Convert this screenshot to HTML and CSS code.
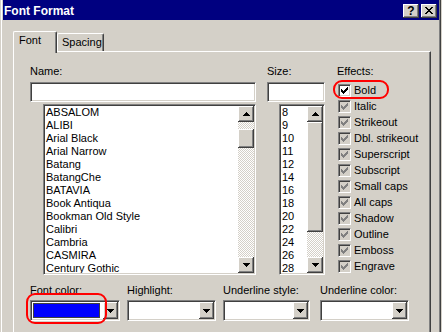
FILE: index.html
```html
<!DOCTYPE html>
<html>
<head>
<meta charset="utf-8">
<title>Font Format</title>
<link rel="stylesheet" href="styles.css">
</head>
<body>
<div class="win">
  <div class="titlebar">
    <span class="title">Font Format</span>
    <span class="tbtn help">?</span>
    <span class="tbtn close"><svg width="8" height="7" viewBox="0 0 8 7" shape-rendering="crispEdges"><path d="M0 0h2v1h-2z M6 0h2v1h-2z M1 1h2v1h-2z M5 1h2v1h-2z M2 2h4v1h-4z M3 3h2v1h-2z M2 4h4v1h-4z M1 5h2v1h-2z M5 5h2v1h-2z M0 6h2v1h-2z M6 6h2v1h-2z"/></svg></span>
  </div>

  <div class="tabs">
    <div class="tab sel">Font</div>
    <div class="tab">Spacing</div>
  </div>

  <div class="panel">
    <div class="top">
      <div class="col">
        <div class="lbl">Name:</div>
        <div class="field sunken"></div>
        <div class="list sunken namelist">
          <ul class="items">
            <li>ABSALOM</li>
            <li>ALIBI</li>
            <li>Arial Black</li>
            <li>Arial Narrow</li>
            <li>Batang</li>
            <li>BatangChe</li>
            <li>BATAVIA</li>
            <li>Book Antiqua</li>
            <li>Bookman Old Style</li>
            <li>Calibri</li>
            <li>Cambria</li>
            <li>CASMIRA</li>
            <li>Century Gothic</li>
          </ul>
          <div class="vscroll">
            <div class="sbtn raised"><svg class="arrow" width="7" height="4" viewBox="0 0 7 4" shape-rendering="crispEdges"><path d="M3 0h1v1h-1z M2 1h3v1h-3z M1 2h5v1h-5z M0 3h7v1h-7z"/></svg></div>
            <div class="track"><div class="thumb raised"></div></div>
            <div class="sbtn raised"><svg class="arrow" width="7" height="4" viewBox="0 0 7 4" shape-rendering="crispEdges"><path d="M0 0h7v1h-7z M1 1h5v1h-5z M2 2h3v1h-3z M3 3h1v1h-1z"/></svg></div>
          </div>
        </div>
      </div>

      <div class="col">
        <div class="lbl">Size:</div>
        <div class="field sunken"></div>
        <div class="list sunken sizelist">
          <ul class="items">
            <li>8</li>
            <li>9</li>
            <li>10</li>
            <li>11</li>
            <li>12</li>
            <li>14</li>
            <li>16</li>
            <li>18</li>
            <li>20</li>
            <li>22</li>
            <li>24</li>
            <li>26</li>
            <li>28</li>
          </ul>
          <div class="vscroll">
            <div class="sbtn raised"><svg class="arrow" width="7" height="4" viewBox="0 0 7 4" shape-rendering="crispEdges"><path d="M3 0h1v1h-1z M2 1h3v1h-3z M1 2h5v1h-5z M0 3h7v1h-7z"/></svg></div>
            <div class="track"><div class="thumb raised"></div></div>
            <div class="sbtn raised"><svg class="arrow" width="7" height="4" viewBox="0 0 7 4" shape-rendering="crispEdges"><path d="M0 0h7v1h-7z M1 1h5v1h-5z M2 2h3v1h-3z M3 3h1v1h-1z"/></svg></div>
          </div>
        </div>
      </div>

      <div class="col effects">
        <div class="lbl">Effects:</div>
        <div class="fx">
          <div class="fxrow"><span class="cb on"><svg width="7" height="7" viewBox="0 0 7 7" shape-rendering="crispEdges"><path d="M0 2h1v3h-1z M1 3h1v3h-1z M2 4h1v3h-1z M3 3h1v3h-1z M4 2h1v3h-1z M5 1h1v3h-1z M6 0h1v3h-1z"/></svg></span>Bold</div>
          <div class="fxrow"><span class="cb"><svg width="7" height="7" viewBox="0 0 7 7" shape-rendering="crispEdges"><path d="M0 2h1v3h-1z M1 3h1v3h-1z M2 4h1v3h-1z M3 3h1v3h-1z M4 2h1v3h-1z M5 1h1v3h-1z M6 0h1v3h-1z"/></svg></span>Italic</div>
          <div class="fxrow"><span class="cb"><svg width="7" height="7" viewBox="0 0 7 7" shape-rendering="crispEdges"><path d="M0 2h1v3h-1z M1 3h1v3h-1z M2 4h1v3h-1z M3 3h1v3h-1z M4 2h1v3h-1z M5 1h1v3h-1z M6 0h1v3h-1z"/></svg></span>Strikeout</div>
          <div class="fxrow"><span class="cb"><svg width="7" height="7" viewBox="0 0 7 7" shape-rendering="crispEdges"><path d="M0 2h1v3h-1z M1 3h1v3h-1z M2 4h1v3h-1z M3 3h1v3h-1z M4 2h1v3h-1z M5 1h1v3h-1z M6 0h1v3h-1z"/></svg></span>Dbl. strikeout</div>
          <div class="fxrow"><span class="cb"><svg width="7" height="7" viewBox="0 0 7 7" shape-rendering="crispEdges"><path d="M0 2h1v3h-1z M1 3h1v3h-1z M2 4h1v3h-1z M3 3h1v3h-1z M4 2h1v3h-1z M5 1h1v3h-1z M6 0h1v3h-1z"/></svg></span>Superscript</div>
          <div class="fxrow"><span class="cb"><svg width="7" height="7" viewBox="0 0 7 7" shape-rendering="crispEdges"><path d="M0 2h1v3h-1z M1 3h1v3h-1z M2 4h1v3h-1z M3 3h1v3h-1z M4 2h1v3h-1z M5 1h1v3h-1z M6 0h1v3h-1z"/></svg></span>Subscript</div>
          <div class="fxrow"><span class="cb"><svg width="7" height="7" viewBox="0 0 7 7" shape-rendering="crispEdges"><path d="M0 2h1v3h-1z M1 3h1v3h-1z M2 4h1v3h-1z M3 3h1v3h-1z M4 2h1v3h-1z M5 1h1v3h-1z M6 0h1v3h-1z"/></svg></span>Small caps</div>
          <div class="fxrow"><span class="cb"><svg width="7" height="7" viewBox="0 0 7 7" shape-rendering="crispEdges"><path d="M0 2h1v3h-1z M1 3h1v3h-1z M2 4h1v3h-1z M3 3h1v3h-1z M4 2h1v3h-1z M5 1h1v3h-1z M6 0h1v3h-1z"/></svg></span>All caps</div>
          <div class="fxrow"><span class="cb"><svg width="7" height="7" viewBox="0 0 7 7" shape-rendering="crispEdges"><path d="M0 2h1v3h-1z M1 3h1v3h-1z M2 4h1v3h-1z M3 3h1v3h-1z M4 2h1v3h-1z M5 1h1v3h-1z M6 0h1v3h-1z"/></svg></span>Shadow</div>
          <div class="fxrow"><span class="cb"><svg width="7" height="7" viewBox="0 0 7 7" shape-rendering="crispEdges"><path d="M0 2h1v3h-1z M1 3h1v3h-1z M2 4h1v3h-1z M3 3h1v3h-1z M4 2h1v3h-1z M5 1h1v3h-1z M6 0h1v3h-1z"/></svg></span>Outline</div>
          <div class="fxrow"><span class="cb"><svg width="7" height="7" viewBox="0 0 7 7" shape-rendering="crispEdges"><path d="M0 2h1v3h-1z M1 3h1v3h-1z M2 4h1v3h-1z M3 3h1v3h-1z M4 2h1v3h-1z M5 1h1v3h-1z M6 0h1v3h-1z"/></svg></span>Emboss</div>
          <div class="fxrow"><span class="cb"><svg width="7" height="7" viewBox="0 0 7 7" shape-rendering="crispEdges"><path d="M0 2h1v3h-1z M1 3h1v3h-1z M2 4h1v3h-1z M3 3h1v3h-1z M4 2h1v3h-1z M5 1h1v3h-1z M6 0h1v3h-1z"/></svg></span>Engrave</div>
        </div>
      </div>
    </div>

    <div class="bottom">
      <div class="bcol">
        <div class="lbl">Font color:</div>
        <div class="combo sunken c1"><span class="swatch"></span><span class="dd raised"><svg class="arrow" width="7" height="4" viewBox="0 0 7 4" shape-rendering="crispEdges"><path d="M0 0h7v1h-7z M1 1h5v1h-5z M2 2h3v1h-3z M3 3h1v1h-1z"/></svg></span></div>
      </div>
      <div class="bcol">
        <div class="lbl">Highlight:</div>
        <div class="combo sunken c2"><span></span><span class="dd raised"><svg class="arrow" width="7" height="4" viewBox="0 0 7 4" shape-rendering="crispEdges"><path d="M0 0h7v1h-7z M1 1h5v1h-5z M2 2h3v1h-3z M3 3h1v1h-1z"/></svg></span></div>
      </div>
      <div class="bcol">
        <div class="lbl">Underline style:</div>
        <div class="combo sunken c3"><span></span><span class="dd raised"><svg class="arrow" width="7" height="4" viewBox="0 0 7 4" shape-rendering="crispEdges"><path d="M0 0h7v1h-7z M1 1h5v1h-5z M2 2h3v1h-3z M3 3h1v1h-1z"/></svg></span></div>
      </div>
      <div class="bcol">
        <div class="lbl">Underline color:</div>
        <div class="combo sunken c4"><span></span><span class="dd raised"><svg class="arrow" width="7" height="4" viewBox="0 0 7 4" shape-rendering="crispEdges"><path d="M0 0h7v1h-7z M1 1h5v1h-5z M2 2h3v1h-3z M3 3h1v1h-1z"/></svg></span></div>
      </div>
    </div>
  </div>

  <div class="mark mark-bold"></div>
  <div class="mark mark-color"></div>
</div>
</body>
</html>
```

FILE: styles.css
```css
html, body {
  margin: 0;
  padding: 0;
}
body {
  background: #d4d0c8;
  font-family: "Liberation Sans", Arial, sans-serif;
  font-size: 11px;
  line-height: 13px;
  color: #000;
  overflow: hidden;
}

.win {
  position: relative;
  width: 441px;
  height: 332px;
  box-sizing: border-box;
  padding: 0 2px 0 3px;
  background: #d4d0c8;
  overflow: hidden;
  box-shadow: inset 1px 0 #d4d0c8, inset 2px 0 #fff, inset -1px 0 #404040, inset -2px 0 #808080;
}

/* title bar */
.titlebar {
  height: 20px;
  background: #000080;
  color: #fff;
  display: flex;
  align-items: flex-start;
  padding: 0 2px 0 1px;
}
.title {
  flex: 1;
  font-weight: bold;
  font-size: 12px;
  line-height: 14px;
  margin-top: 4px;
}
.tbtn {
  width: 16px;
  height: 14px;
  margin-top: 4px;
  box-sizing: border-box;
  background: #d4d0c8;
  color: #000;
  display: flex;
  align-items: center;
  justify-content: center;
  box-shadow: inset -1px -1px #404040, inset 1px 1px #fff, inset -2px -2px #808080, inset 2px 2px #d4d0c8;
}
.help {
  margin-right: 2px;
  font-weight: bold;
  font-size: 12px;
  line-height: 12px;
}
.close svg {
  fill: #000;
  margin-top: -1px;
}

/* tabs */
.tabs {
  display: flex;
  align-items: flex-end;
  height: 20px;
  margin: 11px 0 0 10px;
}
.tab {
  box-sizing: border-box;
  width: 47px;
  height: 18px;
  padding: 2px 0 0 4px;
  background: #d4d0c8;
  border-top: 1px solid #fff;
  border-left: 1px solid #fff;
  border-right: 1px solid #404040;
  border-radius: 2px 2px 0 0;
  box-shadow: inset -1px 0 #808080;
}
.tab.sel {
  width: 44px;
  height: 22px;
  margin-bottom: -2px;
  position: relative;
  z-index: 1;
  padding-left: 5px;
}

/* panel */
.panel {
  box-sizing: border-box;
  width: 418px;
  height: 300px;
  margin-left: 10px;
  padding: 13px 0 0 16px;
  border-top: 1px solid #fff;
  border-left: 1px solid #fff;
  border-right: 1px solid #404040;
  box-shadow: inset -1px 0 #808080;
}

.sunken {
  border: 1px solid;
  border-color: #808080 #fff #fff #808080;
  box-shadow: inset 1px 1px #404040, inset -1px -1px #d4d0c8;
  background: #fff;
  box-sizing: border-box;
}
.raised {
  background: #d4d0c8;
  box-sizing: border-box;
  box-shadow: inset -1px -1px #404040, inset 1px 1px #fff, inset -2px -2px #808080, inset 2px 2px #d4d0c8;
}

.top {
  display: grid;
  grid-template-columns: 226px 58px 1fr;
  column-gap: 11px;
}
.lbl {
  height: 13px;
  line-height: 13px;
  white-space: nowrap;
}
.field {
  margin-top: 4px;
  height: 20px;
}
.list {
  margin-top: 2px;
  height: 171px;
  padding: 1px;
  display: flex;
  overflow: hidden;
}
.namelist { margin-left: 13px; }
.sizelist { margin-left: 12px; }

.items {
  flex: 1;
  list-style: none;
  margin: 0;
  padding: 0 0 0 1px;
  overflow: hidden;
  white-space: nowrap;
}
.items li {
  height: 13px;
  line-height: 13px;
}

.vscroll {
  width: 16px;
  display: flex;
  flex-direction: column;
}
.sbtn {
  height: 16px;
  flex: none;
  display: flex;
  align-items: center;
  justify-content: center;
}
.arrow { fill: #000; }
.track {
  flex: 1;
  background: repeating-conic-gradient(#fff 0 25%, #d4d0c8 0 50%) 0 0 / 2px 2px;
}
.namelist .thumb {
  margin-top: 7px;
  height: 19px;
}
.sizelist .thumb {
  height: 110px;
}

/* effects */
.effects { padding-left: 1px; }
.fx { margin-top: 4px; }
.fxrow {
  height: 16px;
  display: flex;
  align-items: center;
  gap: 3px;
  white-space: nowrap;
}
.cb {
  width: 13px;
  height: 13px;
  margin-left: 1px;
  padding: 2px;
  box-sizing: border-box;
  display: flex;
  border: 1px solid;
  border-color: #808080 #fff #fff #808080;
  box-shadow: inset 1px 1px #404040, inset -1px -1px #d4d0c8;
  background: #d4d0c8;
  fill: #808080;
}
.cb.on {
  background: #fff;
  fill: #000;
}

/* bottom row */
.bottom {
  display: grid;
  grid-template-columns: 97px 96px 97px 89px;
  margin-top: 9px;
}
.combo {
  margin-top: 3px;
  height: 21px;
  padding: 1px;
  display: flex;
  justify-content: space-between;
}
.c1 { width: 90px; }
.c2 { width: 89px; }
.c3 { width: 87px; }
.c4 { width: 89px; }
.dd {
  width: 15px;
  height: 17px;
  display: flex;
  align-items: center;
  justify-content: center;
}
.swatch {
  margin: 2px;
  width: 65px;
  height: 13px;
  background: #0000ff;
  outline: 1px solid #404040;
}

/* red annotation marks */
.mark {
  position: absolute;
  box-sizing: border-box;
  border: 2px solid #f00;
  border-radius: 9px;
  z-index: 5;
}
.mark-bold {
  left: 333px;
  top: 80px;
  width: 56px;
  height: 19px;
}
.mark-color {
  left: 26px;
  top: 293px;
  width: 81px;
  height: 31px;
}
```
